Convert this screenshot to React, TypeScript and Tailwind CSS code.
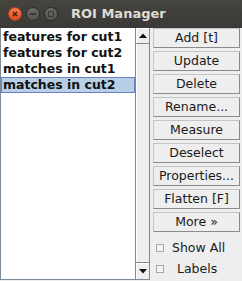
import React from 'react'

const rois = ['features for cut1', 'features for cut2', 'matches in cut1', 'matches in cut2']
const buttons = ['Add [t]', 'Update', 'Delete', 'Rename...', 'Measure', 'Deselect', 'Properties...', 'Flatten [F]', 'More »']

function TitleBar() {
  return (
    <div className="h-[28px] flex items-center bg-gradient-to-b from-[#45443f] to-[#3a3935] shrink-0">
      <div className="flex items-center gap-[4px] pl-[8px]">
        <div className="w-[14px] h-[14px] rounded-full bg-gradient-to-b from-[#f7784c] to-[#df4a1f] border border-[#b8401c] flex items-center justify-center">
          <svg width="6" height="6" viewBox="0 0 6 6">
            <path d="M1 1L5 5M5 1L1 5" stroke="#4a1a0a" strokeWidth="1.4" />
          </svg>
        </div>
        <div className="w-[14px] h-[14px] rounded-full bg-gradient-to-b from-[#6b6a65] to-[#55544f] border border-[#2e2d2a] flex items-center justify-center">
          <div className="w-[6px] h-[2px] bg-[#3a3935]" />
        </div>
        <div className="w-[14px] h-[14px] rounded-full bg-gradient-to-b from-[#6b6a65] to-[#55544f] border border-[#2e2d2a] flex items-center justify-center">
          <div className="w-[6px] h-[6px] border border-[#3a3935]" />
        </div>
      </div>
      <span className="ml-[13px] text-[13px] font-bold text-[#dfdbd2]">ROI Manager</span>
    </div>
  )
}

function Arrow({ down }: { down?: boolean }) {
  return (
    <svg width="8" height="5" viewBox="0 0 8 5">
      <path d={down ? 'M0 0H8L4 4.5Z' : 'M0 5H8L4 0.5Z'} fill="#111" />
    </svg>
  )
}

export default function App() {
  return (
    <div
      className="w-[242px] h-[281px] bg-[#eeeeee] flex flex-col overflow-hidden"
      style={{ fontFamily: '"DejaVu Sans", sans-serif' }}
    >
      <TitleBar />
      <div className="flex flex-1 min-h-0 pb-[1px]">
        {/* List */}
        <div className="w-[135px] bg-white border-l border-b border-[#7a8a99] pt-[1px] flex flex-col">
          {rois.map((r, i) => (
            <div
              key={r}
              className={`h-[16px] flex items-center pl-[1px] text-[12.5px] font-bold text-[#111] leading-none border whitespace-nowrap ${
                i === 3 ? 'bg-[#b8cfe5] border-[#6382bf]' : 'border-transparent'
              }`}
            >
              {r}
            </div>
          ))}
        </div>
        {/* Scrollbar */}
        <div className="w-[15px] flex flex-col border-l border-b border-r border-[#7a8a99] bg-[#eeeeee]">
          <div className="h-[16px] flex items-center justify-center border-b border-[#7a8a99] bg-[#eeeeee] shadow-[inset_1px_1px_0_#ffffff]">
            <Arrow />
          </div>
          <div className="flex-1 shadow-[inset_1px_0_0_#ffffff]" />
          <div className="h-[17px] flex items-center justify-center border-t border-[#7a8a99] bg-[#eeeeee] shadow-[inset_1px_1px_0_#ffffff]">
            <Arrow down />
          </div>
        </div>
        {/* Buttons */}
        <div className="flex flex-col pl-[3px] w-[92px]">
          {buttons.map((b) => (
            <div
              key={b}
              className="mt-[3px] first:mt-[0px] w-[87px] h-[20px] flex items-center justify-center bg-[#eeeeee] border border-[#c4c4c4] border-b-[#8a8a8a] border-r-[#8a8a8a] text-[12.5px] text-[#1a1a1a] leading-none whitespace-nowrap"
            >
              {b}
            </div>
          ))}
          <div className="flex items-center h-[18px] mt-[7px] pl-[3px] text-[12.5px] text-[#1a1a1a]">
            <div className="w-[8px] h-[8px] border border-[#a8a8a8] bg-[#f4f4f4] mr-[8px]" />
            Show All
          </div>
          <div className="flex items-center h-[18px] mt-[3px] pl-[3px] text-[12.5px] text-[#1a1a1a]">
            <div className="w-[8px] h-[8px] border border-[#a8a8a8] bg-[#f4f4f4] mr-[13px]" />
            Labels
          </div>
        </div>
      </div>
    </div>
  )
}
